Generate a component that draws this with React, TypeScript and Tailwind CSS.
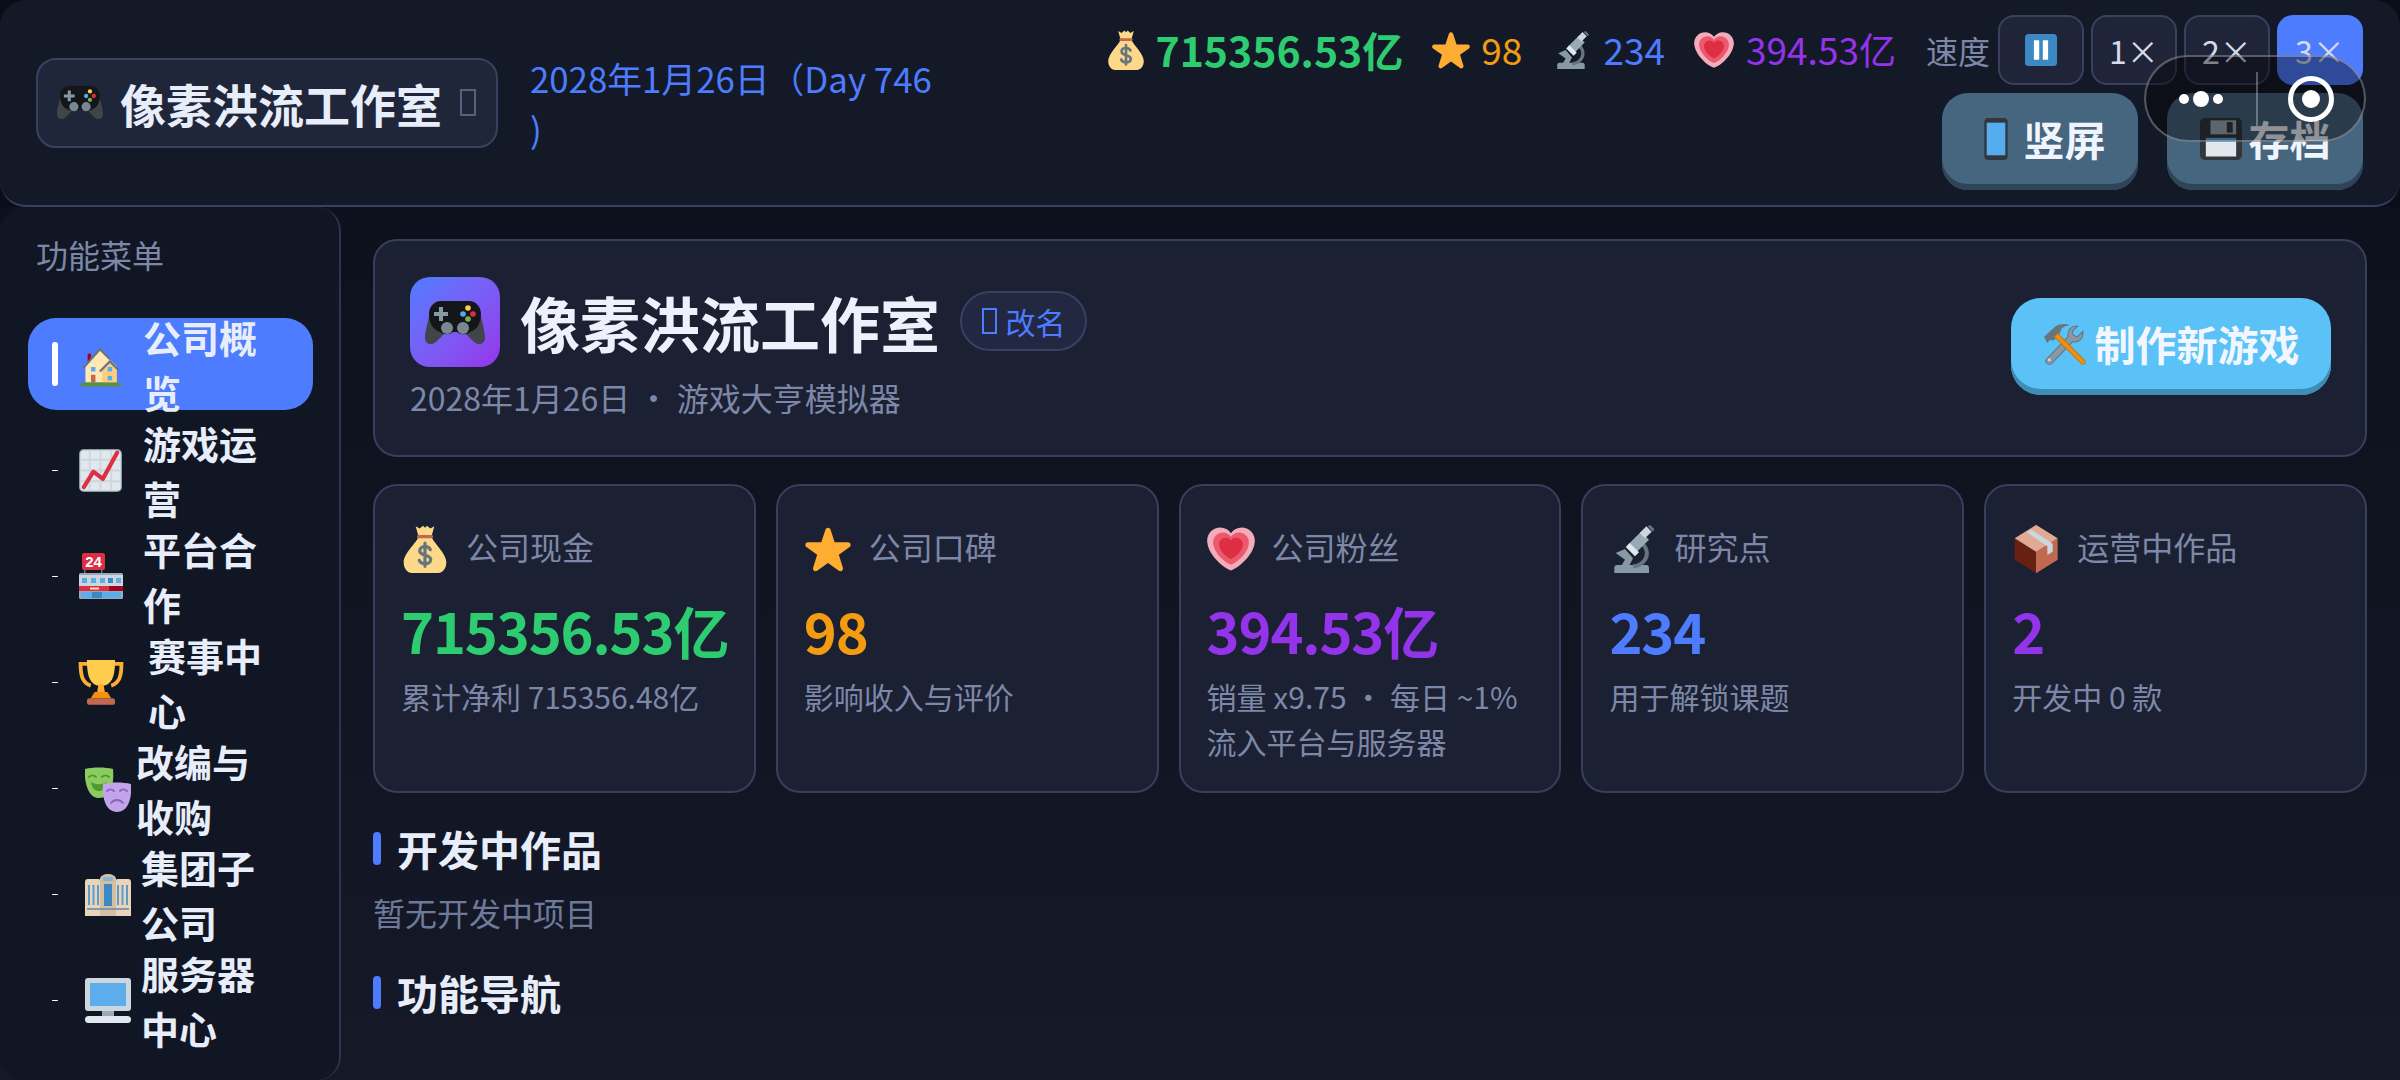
type IconProps = { className?: string };

const heartPath =
  "M35.885 11.833c0-5.45-4.418-9.868-9.867-9.868-3.308 0-6.227 1.633-8.018 4.129-1.791-2.496-4.71-4.129-8.017-4.129-5.45 0-9.868 4.417-9.868 9.868 0 .772.098 1.52.266 2.241C1.751 22.587 11.216 31.568 18 34.034c6.783-2.466 16.249-11.447 17.617-19.959.17-.721.268-1.469.268-2.242z";

function GamepadIcon({ className }: IconProps) {
  return (
    <svg viewBox="0 0 60 43" className={className}>
      <path fill="#3F4549" d="M5 12C3 20 0 31 0 37c0 4 3 6 6 6 2 0 4-1 6-3l10-10zM55 12c2 8 5 19 5 25 0 4-3 6-6 6-2 0-4-1-6-3L38 30z" />
      <path fill="#14171A" d="M16 0h28c7 0 12 6 12 13 0 9-4 16-11 18-3 3-10 3-13 0h-4c-3 3-10 3-13 0C8 29 4 22 4 13 4 6 9 0 16 0z" />
      <path fill="#8899A6" d="M14 6h4v5h5v4h-5v5h-4v-5H9v-4h5z" />
      <circle fill="#FFCC4D" cx="43" cy="7" r="2.800" />
      <circle fill="#55ACEE" cx="38" cy="13" r="2.800" />
      <circle fill="#DD2E44" cx="48" cy="13" r="2.800" />
      <circle fill="#77B255" cx="43" cy="18" r="2.800" />
      <circle fill="#7A8793" cx="22" cy="27" r="6" />
      <circle fill="#7A8793" cx="38" cy="27" r="6" />
    </svg>
  );
}

function MoneyBagIcon({ className }: IconProps) {
  return (
    <svg viewBox="0 0 36 36" className={className}>
      <path fill="#FDD888" d="M13 9h10c1 4 11 12 11 19 0 5-3 8-6 8H8c-3 0-6-3-6-8 0-7 10-15 11-19z" />
      <path fill="#FDD888" d="M11 1l3 1.600L16.500.5 18 2l1.500-1.500L22 2.600 25 1l-2 7H13z" />
      <rect fill="#BF6952" x="12" y="7.500" width="12" height="2.500" rx="1" />
      <path fill="none" stroke="#67757F" strokeWidth="2.400" strokeLinecap="round" d="M22 18.500c-.6-1.600-2.200-2.300-4-2.300-2.300 0-4 1.200-4 3.100 0 4.200 8.300 2.500 8.300 6.600 0 2-1.900 3.200-4.300 3.200-2 0-3.700-.9-4.300-2.600M18 13.500v17.500" />
    </svg>
  );
}

function StarIcon({ className }: IconProps) {
  return (
    <svg viewBox="0 0 36 36" className={className}>
      <path fill="#FFAC33" d="M27.287 34.627c-.404 0-.806-.124-1.152-.371L18 28.422l-8.135 5.834c-.693.496-1.623.496-2.312-.008-.689-.499-.979-1.385-.721-2.194l3.034-9.792-8.062-5.681c-.685-.505-.97-1.393-.708-2.203.264-.808 1.016-1.357 1.866-1.363L12.947 13l3.179-9.549c.268-.809 1.023-1.353 1.874-1.353.851 0 1.606.545 1.875 1.353L23 13l10.036.015c.853.006 1.606.556 1.867 1.363.263.81-.022 1.698-.708 2.203l-8.062 5.681 3.034 9.792c.26.809-.033 1.695-.72 2.194-.347.254-.753.379-1.16.379z" />
    </svg>
  );
}

function MicroscopeIcon({ className }: IconProps) {
  return (
    <svg viewBox="0 0 36 36" className={className}>
      <path fill="#8899A6" d="M6 30h22c1 0 2 1 2 2v4H4v-4c0-1 1-2 2-2z" />
      <path fill="none" stroke="#66757F" strokeWidth="3" d="M22 12c6 3 8 9 5 14-2 3-5 5-9 5" />
      <path fill="#8899A6" d="M5 21l7-3 6 7-3 6H9l3-5z" />
      <path fill="#99AAB5" d="M14 15L24 5l6 6-10 10z" />
      <path fill="#E1E8ED" d="M12.500 16.500l3-3 7 7-3 3z" />
      <path fill="#CCD6DD" d="M23 6l5-5 4 4-5 5z" />
      <path fill="#66757F" d="M29 1l2-1 3 3-1 2z" />
    </svg>
  );
}

function HeartIcon({ className }: IconProps) {
  return (
    <svg viewBox="0 0 36 36" className={className}>
      <path fill="#F4ABBA" d={heartPath} />
      <path fill="#EA596E" transform="translate(4.500 4.200) scale(.75)" d={heartPath} />
      <path fill="#DD2E44" transform="translate(9 8.500) scale(.5)" d={heartPath} />
    </svg>
  );
}

function PhoneIcon({ className }: IconProps) {
  return (
    <svg viewBox="0 0 36 36" className={className}>
      <rect fill="#31373D" x="8" y="0" width="20" height="36" rx="3.500" />
      <rect fill="#55ACEE" x="10" y="4" width="16" height="28" />
    </svg>
  );
}

function FloppyIcon({ className }: IconProps) {
  return (
    <svg viewBox="0 0 36 36" className={className}>
      <path fill="#31373D" d="M4 0h28c2 0 4 2 4 4v28c0 2-2 4-4 4H4c-2 0-4-2-4-4V4c0-2 2-4 4-4z" />
      <rect fill="#99AAB5" x="9" y="2" width="22" height="12" />
      <rect fill="#31373D" x="23" y="3.500" width="5" height="9" />
      <rect fill="#55ACEE" x="5" y="17" width="26" height="3" />
      <rect fill="#E1E8ED" x="5" y="20" width="26" height="13" />
    </svg>
  );
}

function PauseIcon({ className }: IconProps) {
  return (
    <svg viewBox="0 0 36 36" className={className}>
      <rect fill="#3B88C3" x="0" y="0" width="36" height="36" rx="4" />
      <rect fill="#fff" x="10" y="7" width="6" height="22" rx="1" />
      <rect fill="#fff" x="20" y="7" width="6" height="22" rx="1" />
    </svg>
  );
}

function HouseIcon({ className }: IconProps) {
  return (
    <svg viewBox="0 0 36 36" className={className}>
      <rect fill="#A0041E" x="6" y="6" width="3" height="9" />
      <path fill="#FFE8B6" d="M4 32V17L17 3l15 14v15z" />
      <path fill="#FFCC80" d="M19 32V19l7-6 6 5v14z" />
      <path fill="none" stroke="#66757F" strokeWidth="2" d="M2 19L17 2l9 9M17 22l9-9 8 8" />
      <rect fill="#55ACEE" x="9" y="18" width="4" height="4" />
      <rect fill="#55ACEE" x="24" y="18" width="4" height="4" />
      <rect fill="#55ACEE" x="24" y="26" width="4" height="4" />
      <rect fill="#C1694F" x="9" y="25" width="4" height="7" />
      <rect fill="#5C913B" x="0" y="32" width="36" height="3.500" rx="1.500" />
    </svg>
  );
}

function ChartIcon({ className }: IconProps) {
  return (
    <svg viewBox="0 0 36 36" className={className}>
      <rect fill="#8899A6" x="0" y="0" width="36" height="36" rx="4" />
      <rect fill="#E1E8ED" x="1" y="1" width="34" height="34" rx="3" />
      <path fill="none" stroke="#CCD6DD" strokeWidth="1.500" d="M9 1v34M18 1v34M27 1v34M1 9h34M1 18h34M1 27h34" />
      <path fill="none" stroke="#DD2E44" strokeWidth="3.500" strokeLinecap="round" strokeLinejoin="round" d="M4 32l8-13 8 6 12-22" />
    </svg>
  );
}

function StoreIcon({ className }: IconProps) {
  return (
    <svg viewBox="0 0 44 46" className={className}>
      <rect fill="#DD2E44" x="3" y="0" width="23" height="17" rx="2" />
      <text x="14.500" y="14" textAnchor="middle" fontSize="15" fontWeight="700" fill="#fff" fontFamily="'Liberation Sans', sans-serif">24</text>
      <rect fill="#66757F" x="5" y="17" width="1.500" height="4" />
      <rect fill="#66757F" x="22" y="17" width="1.500" height="4" />
      <rect fill="#99AAB5" x="0" y="20" width="44" height="26" rx="1.500" />
      <rect fill="#CCD6DD" x="0" y="22" width="44" height="11" />
      <rect fill="#5DADEC" x="3" y="25" width="5" height="5" />
      <rect fill="#5DADEC" x="12" y="25" width="5" height="5" />
      <rect fill="#5DADEC" x="21" y="25" width="5" height="5" />
      <rect fill="#3B88C3" x="29" y="25" width="5" height="5" />
      <rect fill="#5DADEC" x="37" y="25" width="5" height="5" />
      <rect fill="#DD2E44" x="0" y="33" width="44" height="5" />
      <rect fill="#A0041E" x="30" y="33" width="14" height="5" />
      <rect fill="#FFE8B6" x="11" y="34.500" width="9" height="2" />
      <rect fill="#5DADEC" x="2" y="39" width="40" height="6" />
      <rect fill="#3B88C3" x="13" y="39" width="10" height="6" />
    </svg>
  );
}

function TrophyIcon({ className }: IconProps) {
  return (
    <svg viewBox="0 0 36 36" className={className}>
      <path fill="none" stroke="#FFAC33" strokeWidth="3" d="M8 3H2c0 8 1 15 8 17M28 3h6c0 8-1 15-8 17" />
      <path fill="#FFCC4D" d="M7 0h22c0 9-1 18-8 20H15C8 18 7 9 7 0z" />
      <path fill="#FFAC33" d="M16 19h4l1 6h-6z" />
      <path fill="#F4900C" d="M13 25h10l3 5H10z" />
      <rect fill="#C1694F" x="7" y="30" width="22" height="5" rx="2" />
    </svg>
  );
}

function MasksIcon({ className }: IconProps) {
  return (
    <svg viewBox="0 0 46 46" className={className}>
      <path fill="#8CCB62" d="M0 3c8-2 20-2 28 0 1 10 0 29-14 29C2 32-1 13 0 3z" />
      <path fill="none" stroke="#4E9A2B" strokeWidth="1.800" strokeLinecap="round" d="M4 11c2-2 5-2 7 0M17 11c2-2 5-2 7 0" />
      <path fill="#4E9A2B" d="M6 16c5 3 11 3 16 0-1 7-4 9-8 9s-7-2-8-9z" />
      <path fill="#C2A5E8" d="M18 18c8-2 20-2 28 0 1 10-1 28-14 28S17 28 18 18z" />
      <path fill="none" stroke="#8A63C4" strokeWidth="1.800" strokeLinecap="round" d="M22 25c2-2 5-2 7 0M35 25c2-2 5-2 7 0M26 37c3-4 9-4 12 0" />
    </svg>
  );
}

function BuildingIcon({ className }: IconProps) {
  return (
    <svg viewBox="0 0 46 42" className={className}>
      <path fill="#E8D5BC" d="M0 8c0-2 1-3 3-3h10c2 0 3 1 3 3v34H0zM30 8c0-2 1-3 3-3h10c2 0 3 1 3 3v34H30z" />
      <path fill="#D2BFA5" d="M15 5c0-3 4-5 8-5s8 2 8 5v37H15z" />
      <rect fill="#8CB4D3" x="18" y="3" width="10" height="4" />
      <path fill="#5D9BC9" d="M3 11h2v20H3zM7.500 11h2v20h-2zM12 11h2v20h-2zM32 11h2v20h-2zM36.500 11h2v20h-2zM41 11h2v20h-2z" />
      <rect fill="#3B88C3" x="19" y="10" width="8" height="22" />
      <path fill="#8899A6" d="M2 34h42v2H2z" />
    </svg>
  );
}

function ComputerIcon({ className }: IconProps) {
  return (
    <svg viewBox="0 0 46 46" className={className}>
      <rect fill="#CCD6DD" x="0" y="0" width="46" height="33" rx="3" />
      <rect fill="#5DADEC" x="5" y="5" width="36" height="23" />
      <rect fill="#99AAB5" x="17" y="33" width="12" height="5" />
      <rect fill="#E1E8ED" x="0" y="38" width="46" height="7" rx="3.500" />
    </svg>
  );
}

function PackageIcon({ className }: IconProps) {
  return (
    <svg viewBox="0 0 36 36" className={className}>
      <path fill="#D99E82" d="M18 0l16 10v16L18 36z" />
      <path fill="#662113" d="M18 36L2 26V10l16 10z" />
      <path fill="#E0AA94" d="M18 0L2 10l16 10 16-10z" />
      <path fill="#C1694F" d="M18 20l16-10v16L18 36z" />
      <path fill="#CCD6DD" d="M11 5.500l3.500-2L30.500 14v6l-4 2.500V16z" />
    </svg>
  );
}

function ToolsIcon({ className }: IconProps) {
  return (
    <svg viewBox="0 0 42 40" className={className}>
      <path fill="#8899A6" stroke="#66757F" strokeWidth="1" d="M3 35L24 13c-1-6 3-11 9-10l-5 5 1 4 4 1 5-5c1 7-4 11-10 10L8 39c-2 1-7-1-5-4z" />
      <circle fill="#CCD6DD" cx="6" cy="35" r="1.500" />
      <path fill="#66757F" d="M1 13L12 3c4-2 9-3 14-1-4 0-8 2-9 5l-1 3-6 7-3-1-3 3z" />
      <path fill="#F4900C" stroke="#BE7B1A" strokeWidth="1" d="M11 13l3-3 26 26c1 2-1 4-3 3z" />
    </svg>
  );
}

function Tofu({ className }: IconProps) {
  return <span className={`inline-block border-2 ${className ?? ""}`} />;
}

const navItems = [
  { lines: "公司概览", Icon: HouseIcon, iconClass: "ml-[23px] w-[40px] h-[42px] mt-[6px]", textClass: "ml-[22px]", active: true },
  { lines: "游戏运营", Icon: ChartIcon, iconClass: "ml-[21px] w-[43px] h-[43px]", textClass: "ml-[21px]", active: false },
  { lines: "平台合作", Icon: StoreIcon, iconClass: "ml-[21px] w-[44px] h-[46px]", textClass: "ml-[20px]", active: false },
  { lines: "赛事中心", Icon: TrophyIcon, iconClass: "ml-[20px] w-[46px] h-[46px] mt-[2px]", textClass: "ml-[24px]", active: false },
  { lines: "改编与收购", Icon: MasksIcon, iconClass: "ml-[27px] w-[46px] h-[46px] mt-[2px]", textClass: "ml-[5px]", active: false },
  { lines: "集团子公司", Icon: BuildingIcon, iconClass: "ml-[27px] w-[46px] h-[42px] mt-[2px]", textClass: "ml-[10px]", active: false },
  { lines: "服务器中心", Icon: ComputerIcon, iconClass: "ml-[27px] w-[46px] h-[46px] mt-[2px]", textClass: "ml-[10px]", active: false },
];

const statCards = [
  { label: "公司现金", value: "715356.53亿", color: "text-[#2ecc71]", Icon: MoneyBagIcon, desc: ["累计净利 715356.48亿"] },
  { label: "公司口碑", value: "98", color: "text-[#f39c12]", Icon: StarIcon, desc: ["影响收入与评价"] },
  { label: "公司粉丝", value: "394.53亿", color: "text-[#9333ea]", Icon: HeartIcon, desc: ["销量 x9.75 · 每日 ~1%", "流入平台与服务器"] },
  { label: "研究点", value: "234", color: "text-[#4d7cff]", Icon: MicroscopeIcon, desc: ["用于解锁课题"] },
  { label: "运营中作品", value: "2", color: "text-[#9333ea]", Icon: PackageIcon, desc: ["开发中 0 款"] },
];

function SectionTitle({ children }: { children: string }) {
  return (
    <div className="flex items-center h-[48px]">
      <span className="w-[8px] h-[33px] rounded-full bg-[#4d7cff]" />
      <h2 className="ml-[16px] text-[41px] leading-[48px] font-bold text-[#e8edfa]">{children}</h2>
    </div>
  );
}

export default function App() {
  return (
    <div className="relative w-[2400px] h-[1080px] overflow-hidden flex flex-col bg-[#0b0e18] font-['Noto_Sans_CJK_SC',sans-serif]">
      <header className="h-[207px] flex-none flex items-center justify-between pl-[36px] pr-[37px] bg-[#141928] border-b-2 border-[#3a4060] rounded-[26px]">
        <div className="flex items-center">
          <div className="w-[462px] h-[90px] flex items-center pl-[19px] rounded-[20px] border-2 border-[#3a4060] bg-[#1f2639]">
            <GamepadIcon className="w-[46px] h-[33px]" />
            <span className="ml-[17px] text-[46px] leading-[60px] font-bold text-[#e8edfa] whitespace-nowrap">像素洪流工作室</span>
            <Tofu className="ml-[18px] w-[16px] h-[27px] border-[#56607f]" />
          </div>
          <div className="ml-[32px] text-[34.8px] leading-[50px] text-[#4d7cff] whitespace-nowrap">
            2028年1月26日（Day 746
            <br />)
          </div>
        </div>

        <div className="flex flex-col items-end">
          <div className="flex items-center h-[70px]">
            <MoneyBagIcon className="w-[40px] h-[40px]" />
            <span className="ml-[9px] text-[41px] font-bold text-[#2ecc71]">715356.53亿</span>
            <StarIcon className="ml-[28px] w-[40px] h-[40px]" />
            <span className="ml-[10px] text-[37px] text-[#f39c12]">98</span>
            <MicroscopeIcon className="ml-[31px] w-[38px] h-[40px]" />
            <span className="ml-[12px] text-[37px] text-[#4d7cff]">234</span>
            <HeartIcon className="ml-[29px] w-[40px] h-[40px]" />
            <span className="ml-[12px] text-[37px] text-[#9333ea]">394.53亿</span>
            <span className="ml-[30px] text-[32px] text-[#7d88a8]">速度</span>
            <div className="ml-[8px] flex gap-[7px]">
              <button className="w-[86px] h-[70px] flex items-center justify-center rounded-[16px] border-2 border-[#3a4060] bg-[#1f2438]">
                <PauseIcon className="w-[32px] h-[32px]" />
              </button>
              <button className="w-[86px] h-[70px] rounded-[16px] border-2 border-[#3a4060] bg-[#1f2438] text-[32px] text-[#d5daea]">1×</button>
              <button className="w-[86px] h-[70px] rounded-[16px] border-2 border-[#3a4060] bg-[#1f2438] text-[32px] text-[#d5daea]">2×</button>
              <button className="w-[86px] h-[70px] rounded-[16px] bg-[#4d7cff] text-[32px] text-[#d5daea]">3×</button>
            </div>
          </div>
          <div className="mt-[8px] flex gap-[29px]">
            <button className="w-[196px] h-[97px] pb-[6px] flex items-center justify-center rounded-[26px] bg-[#46657f] shadow-[inset_0_-6px_0_#2f4557] text-[41px] font-bold text-[#f0f4fc]">
              <PhoneIcon className="w-[42px] h-[42px]" />
              <span className="ml-[7px]">竖屏</span>
            </button>
            <button className="w-[196px] h-[97px] pb-[6px] flex items-center justify-center rounded-[26px] bg-[#46657f] shadow-[inset_0_-6px_0_#2f4557] text-[41px] font-bold text-[#f0f4fc]">
              <FloppyIcon className="w-[42px] h-[42px]" />
              <span className="ml-[7px]">存档</span>
            </button>
          </div>
        </div>
      </header>

      <div className="flex-1 flex min-h-0 bg-linear-to-b from-[#0d111d] to-[#151928]">
        <aside className="w-[341px] flex-none pt-[23px] pl-[28px] pr-[26px] bg-[#111625] border-r-2 border-[#2e3450] rounded-[24px]">
          <div className="ml-[8px] text-[32px] leading-[48px] text-[#7d88a8]">功能菜单</div>
          <nav className="mt-[40px] flex flex-col gap-[14px]">
            {navItems.map(({ lines, Icon, iconClass, textClass, active }) => (
              <div key={lines} className={`h-[92px] flex items-center pl-[24px] rounded-[28px] ${active ? "bg-[#4d7cff]" : ""}`}>
                <span className={`w-[6px] flex-none rounded-full bg-white ${active ? "h-[44px]" : "h-px"}`} />
                <Icon className={`flex-none ${iconClass}`} />
                <span className={`flex-none w-[118px] text-[38px] leading-[55px] font-bold text-[#e8edfa] ${textClass}`}>{lines}</span>
              </div>
            ))}
          </nav>
        </aside>

        <main className="flex-1 min-w-0 pt-[32px] pl-[32px] pr-[33px]">
          <section className="h-[218px] flex items-center justify-between pl-[35px] pr-[34px] rounded-[24px] border-2 border-[#383e5c] bg-[#1b2033]">
            <div>
              <div className="flex items-center">
                <div className="w-[90px] h-[90px] flex items-center justify-center rounded-[20px] bg-linear-to-br from-[#4d7cff] to-[#9333ea]">
                  <GamepadIcon className="w-[60px] h-[43px]" />
                </div>
                <h1 className="ml-[20px] text-[60px] leading-[80px] font-bold text-[#eef1fb]">像素洪流工作室</h1>
                <div className="ml-[20px] mb-[2px] w-[127px] h-[60px] flex items-center justify-center rounded-full border-2 border-[#3a4060] bg-[#222842] text-[#4d7cff]">
                  <Tofu className="w-[15px] h-[26px] border-[#4d7cff]" />
                  <span className="ml-[9px] text-[30px]">改名</span>
                </div>
              </div>
              <div className="mt-[8px] text-[32px] leading-[44px] text-[#7d88a8]">2028年1月26日 · 游戏大亨模拟器</div>
            </div>
            <button className="mb-[3px] w-[320px] h-[97px] pb-[6px] flex items-center justify-center rounded-[30px] bg-[#5ac2f7] shadow-[inset_0_-6px_0_#3f8db5] text-[41px] font-bold text-[#f2f7ff]">
              <ToolsIcon className="w-[44px] h-[42px]" />
              <span className="ml-[8px]">制作新游戏</span>
            </button>
          </section>

          <section className="mt-[27px] grid grid-cols-5 gap-[20px]">
            {statCards.map(({ label, value, color, Icon, desc }) => (
              <div key={label} className="h-[309px] pt-[35px] pl-[26px] pr-[20px] rounded-[24px] border-2 border-[#383e5c] bg-[#1b2033]">
                <div className="flex items-center h-[50px]">
                  <Icon className="w-[48px] h-[48px] mt-[5px]" />
                  <span className="ml-[17px] text-[32px] text-[#7d88a8]">{label}</span>
                </div>
                <div className={`mt-[23px] text-[56px] leading-[72px] font-bold tracking-[-1.12px] whitespace-nowrap ${color}`}>{value}</div>
                <div className="mt-[8px] text-[30px] leading-[45px] text-[#7d88a8]">
                  {desc.map((line) => (
                    <div key={line}>{line}</div>
                  ))}
                </div>
              </div>
            ))}
          </section>

          <div className="mt-[31px]">
            <SectionTitle>开发中作品</SectionTitle>
          </div>
          <p className="mt-[16px] text-[32px] leading-[48px] text-[#6e7a99]">暂无开发中项目</p>
          <div className="mt-[32px]">
            <SectionTitle>功能导航</SectionTitle>
          </div>
        </main>
      </div>

      {/* host app capsule, floats over the page */}
      <div className="absolute left-[2144px] top-[55px] w-[222px] h-[87px] flex items-center rounded-full border-2 border-white/30 bg-black/40">
        <div className="w-[110px] flex items-center justify-center gap-[4px]">
          <span className="w-[10px] h-[10px] rounded-full bg-white" />
          <span className="w-[16px] h-[16px] rounded-full bg-white" />
          <span className="w-[10px] h-[10px] rounded-full bg-white" />
        </div>
        <span className="w-[2px] h-[54px] bg-white/30" />
        <div className="flex-1 flex items-center justify-center">
          <span className="w-[46px] h-[46px] flex items-center justify-center rounded-full border-[5px] border-white">
            <span className="w-[18px] h-[18px] rounded-full bg-white" />
          </span>
        </div>
      </div>
    </div>
  );
}
